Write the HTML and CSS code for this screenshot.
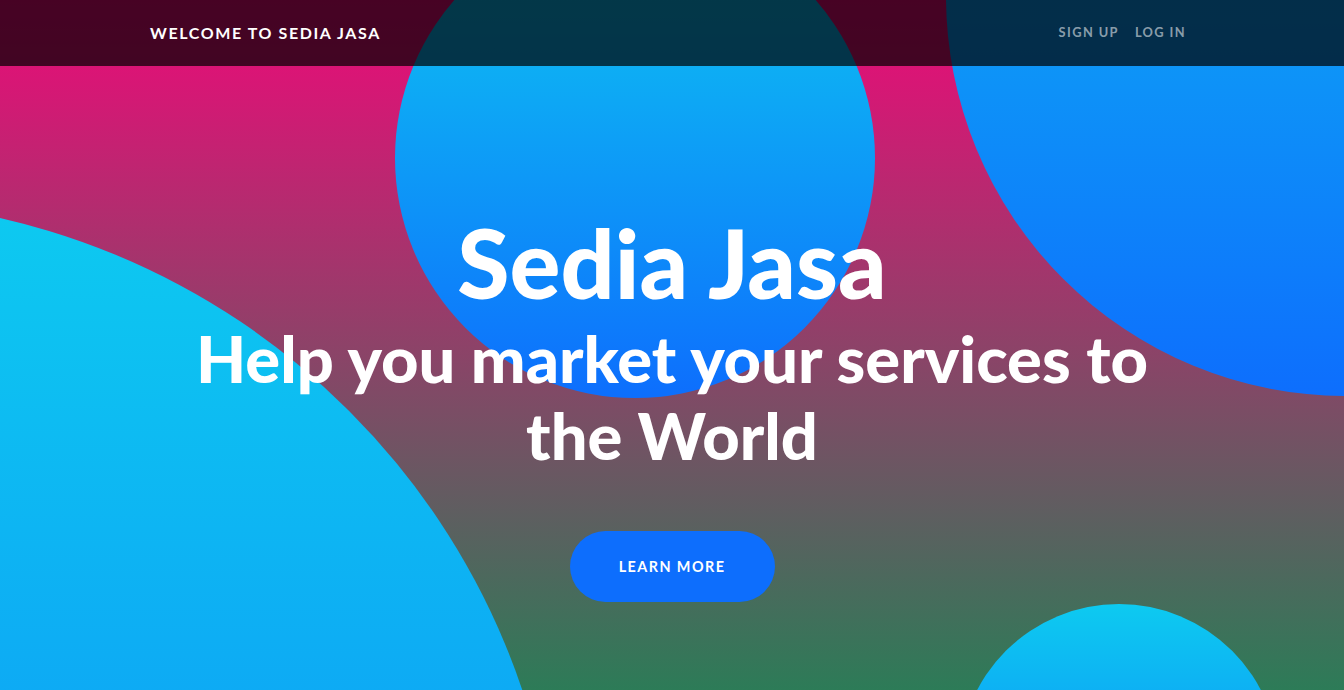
FILE: index.html
```html
<!DOCTYPE html>
<html lang="en">
<head>
<meta charset="utf-8">
<title>Sedia Jasa</title>
<link rel="stylesheet" href="styles.css">
</head>
<body>
<nav class="navbar">
  <div class="nav-inner">
    <a class="brand" href="#">Welcome to Sedia Jasa</a>
    <ul class="nav-links">
      <li><a href="#">Sign Up</a></li>
      <li><a href="#">Log In</a></li>
    </ul>
  </div>
</nav>
<header class="masthead">
  <div class="bg-circle bg-circle-1"></div>
  <div class="bg-circle bg-circle-2"></div>
  <div class="bg-circle bg-circle-3"></div>
  <div class="bg-circle bg-circle-4"></div>
  <div class="masthead-content">
    <h1 class="masthead-heading">Sedia Jasa</h1>
    <h2 class="masthead-subheading">Help you market your services to the World</h2>
    <a class="btn-xl" href="#">Learn More</a>
  </div>
</header>
</body>
</html>
```
FILE: styles.css
```css
* { box-sizing: border-box; }
html, body {
  margin: 0;
  padding: 0;
  height: 690px;
  overflow: hidden;
}
body {
  font-family: Lato, "Liberation Sans", sans-serif;
  color: #fff;
}
a { text-decoration: none; }

.navbar {
  position: absolute;
  top: 0;
  left: 0;
  right: 0;
  z-index: 10;
  height: 66px;
  background-color: rgba(0, 0, 0, 0.7);
}
.nav-inner {
  height: 100%;
  display: flex;
  align-items: center;
  justify-content: space-between;
  padding: 0 150px 0 150px;
}
.brand {
  color: #fff;
  text-transform: uppercase;
  font-size: 16px;
  font-weight: 700;
  letter-spacing: 1.6px;
  margin-top: -2px;
}
.nav-links {
  list-style: none;
  margin: 0;
  padding: 0;
  display: flex;
  margin-top: -2px;
}
.nav-links a {
  display: block;
  padding: 0 8px;
  color: rgba(255, 255, 255, 0.55);
  text-transform: uppercase;
  font-size: 12.8px;
  font-weight: 700;
  letter-spacing: 1.4px;
}

.masthead {
  position: relative;
  overflow: hidden;
  height: 690px;
  padding-top: 205px;
  background: linear-gradient(0deg, #198754 0%, #ee0979 100%);
  background-size: 100% 760px;
  background-repeat: no-repeat;
  text-align: center;
}
.bg-circle {
  position: absolute;
  z-index: 0;
  border-radius: 50%;
  background: linear-gradient(0deg, #0d6efd 0%, #0dcaf0 100%);
}
.bg-circle-1 { width: 1440px; height: 1440px; left: -880px; top: 200px; }
.bg-circle-2 { width: 800px; height: 800px; left: 946px; top: -404px; }
.bg-circle-3 { width: 320px; height: 320px; left: 959px; top: 604px; }
.bg-circle-4 { width: 480px; height: 480px; left: 395px; top: -82px; }

.masthead-content {
  position: relative;
  z-index: 1;
  display: flex;
  flex-direction: column;
  align-items: center;
}
.masthead-heading {
  margin: 0;
  font-size: 95px;
  line-height: 1.2;
  font-weight: 900;
}
.masthead-subheading {
  margin: 1px 0 0;
  max-width: 990px;
  font-size: 65px;
  line-height: 1.18;
  font-weight: 900;
}
.btn-xl {
  margin-top: 58px;
  display: inline-flex;
  align-items: center;
  justify-content: center;
  width: 205px;
  height: 71px;
  border-radius: 999px;
  background-color: #0d6efd;
  color: #fff;
  text-transform: uppercase;
  font-size: 14.4px;
  font-weight: 700;
  letter-spacing: 1.44px;
}
```
